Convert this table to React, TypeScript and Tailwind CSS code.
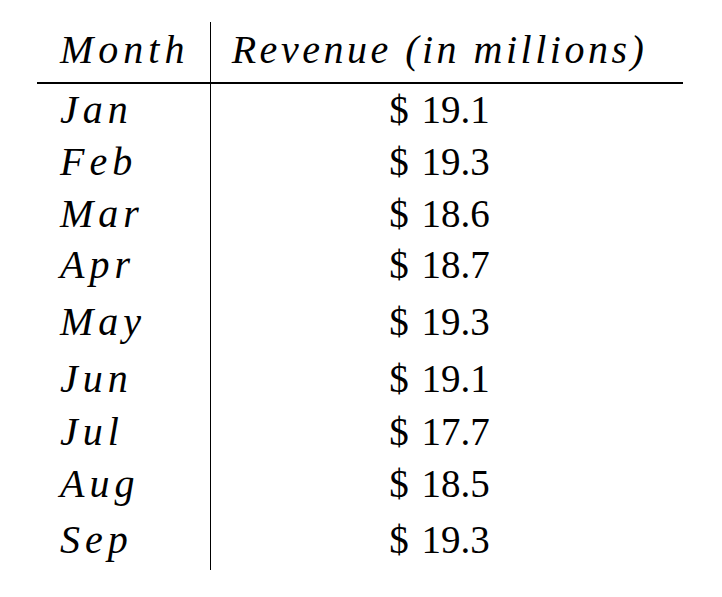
const rows: { month: string; revenue: string; h: string }[] = [
  { month: "Jan", revenue: "19.1", h: "h-[52px]" },
  { month: "Feb", revenue: "19.3", h: "h-[52px]" },
  { month: "Mar", revenue: "18.6", h: "h-[51px]" },
  { month: "Apr", revenue: "18.7", h: "h-[57px]" },
  { month: "May", revenue: "19.3", h: "h-[57px]" },
  { month: "Jun", revenue: "19.1", h: "h-[53px]" },
  { month: "Jul", revenue: "17.7", h: "h-[52px]" },
  { month: "Aug", revenue: "18.5", h: "h-[56px]" },
  { month: "Sep", revenue: "19.3", h: "h-[56.5px]" },
];

export default function App() {
  return (
    <div className="w-[722px] h-[597px] bg-white text-black font-[Liberation_Serif,Times_New_Roman,serif]">
      <div className="flex flex-col w-[646px] ml-[37px] pt-[22px]">
        {/* Header */}
        <div className="flex h-[60px]">
          <div className="w-[174px] border-r-[1.5px] border-black pl-[23px] pt-[1.5px] italic text-[40px] leading-[52px] tracking-[5px]">
            Month
          </div>
          <div className="w-[457px] pt-[1.5px] text-center italic text-[40px] leading-[52px] tracking-[3.5px]">
            Revenue (in millions)
          </div>
        </div>
        <div className="h-[1.5px] bg-black" />

        {/* Body */}
        {rows.map((r) => (
          <div key={r.month} className={`flex ${r.h}`}>
            <div className="w-[174px] border-r-[1.5px] border-black pl-[23px] italic text-[40px] leading-[52px] tracking-[5px]">
              {r.month}
            </div>
            <div className="w-[457px] text-center text-[39px] leading-[52px] [word-spacing:3px]">
              $ {r.revenue}
            </div>
          </div>
        ))}
      </div>
    </div>
  );
}
